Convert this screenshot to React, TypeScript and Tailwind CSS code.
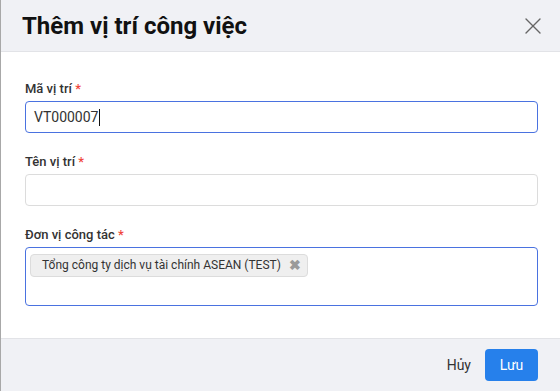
import { X } from "lucide-react";

const Label = ({ text }: { text: string }) => (
  <label className="block text-[13px] font-medium text-[#333] leading-[16px] mb-[4px]">
    {text} <span className="text-[#f0463c]">*</span>
  </label>
);

export default function App() {
  return (
    <div
      className="w-[560px] h-[391px] bg-white border-l border-l-[#a8a8a8] flex flex-col overflow-hidden"
      style={{ fontFamily: "Roboto, 'Noto Sans', sans-serif" }}
    >
      {/* Header */}
      <div className="h-[52px] shrink-0 bg-[#f0f1f5] border-b border-b-[#e2e3e7] flex items-center justify-between pl-[21px] pr-[13px]">
        <h1 className="text-[24px] font-bold text-[#111] leading-none">Thêm vị trí công việc</h1>
        <button className="text-[#666]">
          <X size={28} strokeWidth={1.2} />
        </button>
      </div>

      {/* Body */}
      <div className="flex-1 pl-[24px] pr-[22px] pt-[29px]">
        <div>
          <Label text="Mã vị trí" />
          <div className="h-[32px] rounded-[4px] border border-[#4a72e0] flex items-center px-[8px] text-[14px] text-[#333]">
            VT000007<span className="w-px h-[17px] bg-[#111] ml-px" />
          </div>
        </div>

        <div className="mt-[21px]">
          <Label text="Tên vị trí" />
          <div className="h-[32px] rounded-[4px] border border-[#dcdcdc]" />
        </div>

        <div className="mt-[21px]">
          <Label text="Đơn vị công tác" />
          <div className="h-[59px] rounded-[4px] border border-[#4a72e0] pt-[4px] pl-[4px]">
            <span className="inline-flex items-center h-[23px] rounded-[4px] border border-[#dcdcdc] bg-[#efefef] pl-[11px] pr-[6px] text-[12px] text-[#333]">
              Tổng công ty dịch vụ tài chính ASEAN (TEST)
              <span className="ml-[8px] text-[#9a9a9a] text-[14px] font-bold leading-none">✖</span>
            </span>
          </div>
        </div>
      </div>

      {/* Footer */}
      <div className="h-[53px] shrink-0 bg-[#f0f1f5] border-t border-t-[#e2e3e7] flex items-center justify-end gap-[14px] pr-[22px]">
        <button className="text-[14px] text-[#333]">Hủy</button>
        <button className="h-[32px] w-[53px] rounded-[4px] bg-[#2680eb] text-white text-[14px]">Lưu</button>
      </div>
    </div>
  );
}
